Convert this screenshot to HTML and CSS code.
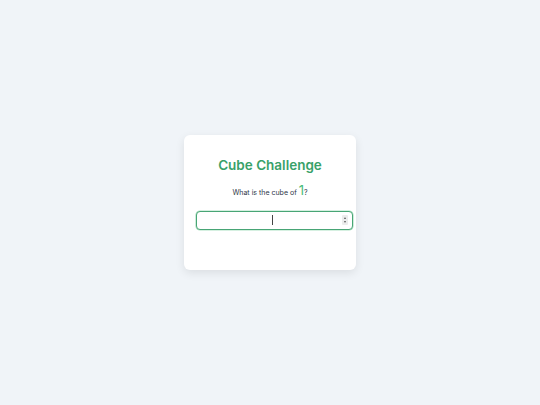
FILE: index.html
```html
<!DOCTYPE html>
<html>
<head>
<meta charset="utf-8">
<link rel="stylesheet" href="styles.css">
</head>
<body>
<main class="page">
  <div class="card">
    <h1 class="title">Cube Challenge</h1>
    <p class="question">What is the cube of <span class="num">1</span>?</p>
    <div class="field">
      <input class="answer" type="number" autofocus>
      <span class="caret"></span>
      <span class="spin"><span class="up"></span><span class="down"></span></span>
    </div>
  </div>
</main>
</body>
</html>
```

FILE: styles.css
```css
html, body {
  margin: 0;
  padding: 0;
  height: 100%;
}
body {
  background: #f0f4f8;
  font-family: Inter, "Noto Sans", sans-serif;
}
.page {
  height: 100%;
  display: flex;
  align-items: center;
  justify-content: center;
}
.card {
  box-sizing: border-box;
  width: 172px;
  height: 135px;
  background: #ffffff;
  border-radius: 6px;
  box-shadow: 0 3px 10px rgba(0, 0, 0, 0.09);
  padding: 22px 12px 0;
  text-align: center;
}
.title {
  margin: 0;
  font-size: 13.5px;
  font-weight: 600;
  color: #38a169;
  line-height: 16px;
}
.question {
  margin: 10px 0 0;
  font-size: 7px;
  color: #2d3748;
  line-height: 14px;
}
.num {
  font-size: 13px;
  color: #48bb78;
}
.field {
  position: relative;
  margin-top: 11px;
  width: 157px;
}
.answer {
  display: block;
  width: 100%;
  box-sizing: border-box;
  height: 19px;
  padding: 0 4px;
  border: 1px solid #48a575;
  border-radius: 4px;
  box-shadow: 0 0 0 0.6px rgba(72, 187, 120, 0.45);
  outline: none;
  text-align: center;
  font-family: inherit;
  font-size: 7px;
  color: #2d3748;
  -moz-appearance: textfield;
}
.answer::-webkit-inner-spin-button,
.answer::-webkit-outer-spin-button {
  -webkit-appearance: none;
  margin: 0;
}
.caret {
  position: absolute;
  left: 76px;
  top: 4px;
  width: 1px;
  height: 10px;
  background: #444;
}
.spin {
  position: absolute;
  right: 5px;
  top: 4px;
  width: 6px;
  height: 10px;
  background: #ececec;
  border-radius: 1px;
  display: flex;
  flex-direction: column;
  align-items: center;
  justify-content: center;
  gap: 2px;
}
.up, .down {
  width: 0;
  height: 0;
  border-left: 1.5px solid transparent;
  border-right: 1.5px solid transparent;
}
.up {
  border-bottom: 2px solid #555;
}
.down {
  border-top: 2px solid #555;
}
```
